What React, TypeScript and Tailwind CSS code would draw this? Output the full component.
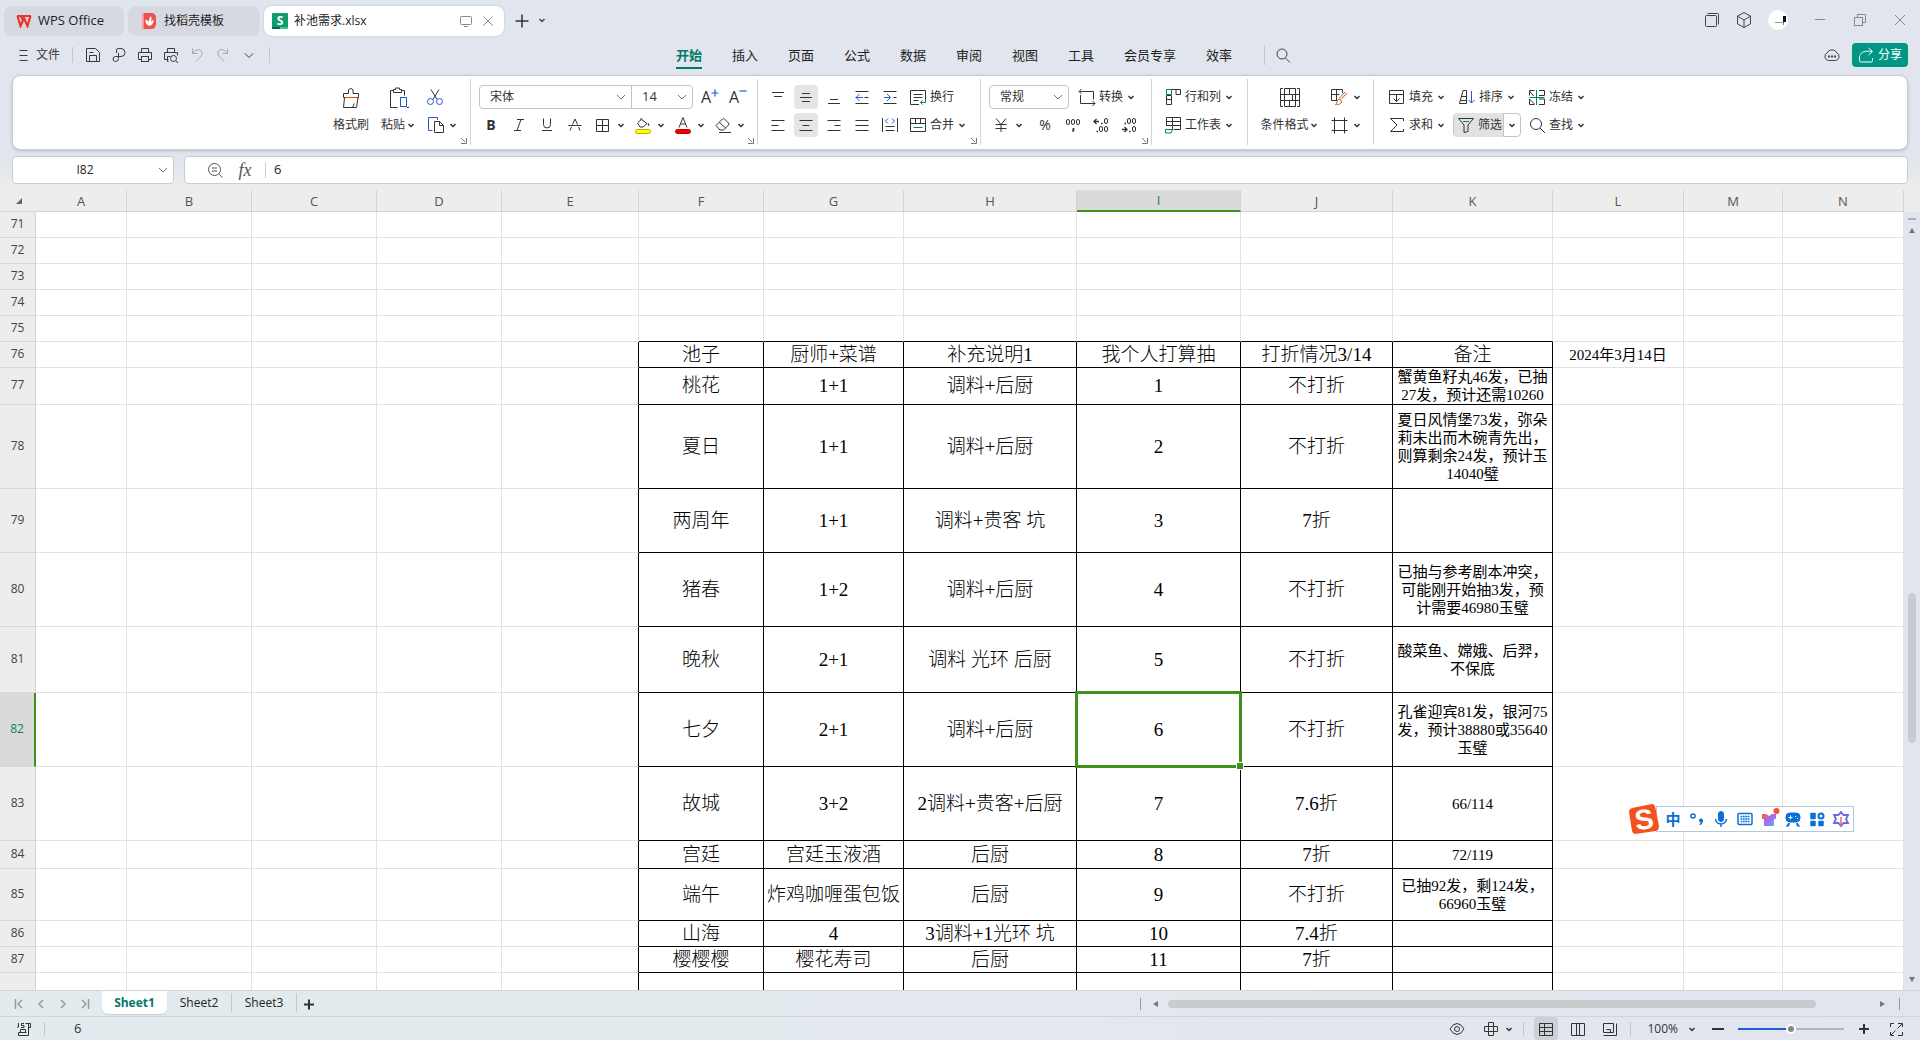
import { useState } from "react";
import type { ReactNode } from "react";
import clsx from "clsx";

type SvgProps = { children: ReactNode; className?: string };

// 24px drawing box, thin strokes
function Svg({ children, className }: SvgProps) {
  return (
    <svg
      viewBox="0 0 24 24"
      fill="none"
      stroke="currentColor"
      aria-hidden="true"
      className={clsx("h-6 w-6 shrink-0", className)}
    >
      {children}
    </svg>
  );
}

function Caret() {
  return (
    <svg viewBox="0 0 12 24" fill="none" stroke="currentColor" strokeWidth="1.5" aria-hidden="true" className="h-6 w-3 shrink-0">
      <path d="M3.5 11 6 13.5 8.5 11" />
    </svg>
  );
}

function Chevron({ className }: { className?: string }) {
  return (
    <svg viewBox="0 0 12 12" fill="none" stroke="currentColor" aria-hidden="true" className={clsx("h-3 w-3 shrink-0", className)}>
      <path d="M2 4l4 4 4-4" />
    </svg>
  );
}

function IconButton({ label, active, children, caret }: { label: string; active?: boolean; children: ReactNode; caret?: boolean }) {
  return (
    <button
      type="button"
      aria-label={label}
      className={clsx("flex h-6 items-center justify-center rounded", caret ? "w-9" : "w-6", active && "bg-[#e5e5e5]")}
    >
      {children}
      {caret && <Caret />}
    </button>
  );
}

function TextButton({ text, children, caret = true }: { text: string; children: ReactNode; caret?: boolean }) {
  return (
    <button type="button" className="flex h-6 items-center whitespace-nowrap">
      {children}
      <span>{text}</span>
      {caret && <span className="ml-0.5"><Caret /></span>}
    </button>
  );
}

function Group({ children, launcher, className }: { children: ReactNode; launcher?: boolean; className?: string }) {
  return (
    <div className={clsx("relative flex h-[66px] shrink-0 border-r border-[#d4d4d4] pt-1.5 last:border-r-0", className)}>
      {children}
      {launcher && (
        <button type="button" aria-label="更多设置" className="absolute right-0.5 bottom-0 h-2 w-2">
          <svg viewBox="0 0 8 8" fill="none" stroke="#777" className="h-2 w-2">
            <path d="M1 1l4 4M6.5 1v5.500H1" />
          </svg>
        </button>
      )}
    </div>
  );
}

function Rows({ children }: { children: ReactNode }) {
  return <div className="flex flex-col gap-1">{children}</div>;
}

function Select({ label, options, className }: { label: string; options: string[]; className?: string }) {
  return (
    <div className={clsx("relative h-6", className)}>
      <select aria-label={label} className="h-full w-full appearance-none bg-transparent pl-2.5 outline-none">
        {options.map((o) => (
          <option key={o}>{o}</option>
        ))}
      </select>
      <Chevron className="pointer-events-none absolute top-1.5 right-1 text-[#777]" />
    </div>
  );
}

function TitleBar() {
  return (
    <header className="flex h-10 items-center pl-1 pr-2">
      <div className="mt-0.5 flex h-[30px] gap-1">
        <button type="button" className="flex w-[120px] items-center gap-1.5 rounded-lg bg-[#d6d9e1] pl-3 text-[13px]">
          <svg viewBox="0 0 16 14" fill="none" stroke="#f0322a" strokeWidth="2.200" className="h-[14px] w-4">
            <path d="M1 2h14M1.500 2 4.500 12 8 4l3.500 8L14.500 2M5 2l2.500 5" />
          </svg>
          WPS Office
        </button>
        <button type="button" className="flex w-[132px] items-center gap-2 rounded-lg bg-[#d6d9e1] pl-3.5">
          <svg viewBox="0 0 14 16" className="h-4 w-3.5">
            <path d="M0 0h9q5 0 5 5v6q0 5-5 5H0z" fill="#ef5350" />
            <path d="M0 0h2v16H0z" fill="#f99" />
            <path d="M7.500 13C3 11 3 8 4 6.500 6 8 7 8 7 10 7 7 7 5 9 3c1 4 0 5 0 6l2.500-2.500C12 10 10 12 7.500 13z" fill="#fff" />
          </svg>
          找稻壳模板
        </button>
        <div className="flex w-[240px] items-center rounded-lg bg-white pr-2.5 pl-2 shadow-[0_0_2px_#b4b8c0]">
          <svg viewBox="0 0 16 16" className="mr-1.5 h-4 w-4">
            <rect width="16" height="16" rx="1" fill="#119c6b" />
            <path d="M0 14h8v2H0z" fill="#0a6b49" />
            <path d="M8 14h8v2H8z" fill="#3fc492" />
            <text x="8" y="11.500" textAnchor="middle" fontSize="12" fontWeight="700" fill="#fff" fontFamily="Open Sans">S</text>
          </svg>
          <span className="flex-1">补池需求.xlsx</span>
          <button type="button" aria-label="窗口显示" className="mr-2.5 text-[#888]">
            <svg viewBox="0 0 12 12" fill="none" stroke="currentColor" className="h-3 w-3">
              <rect x=".5" y="1.500" width="11" height="8" rx="1" />
              <path d="M4 11.500h4" />
            </svg>
          </button>
          <button type="button" aria-label="关闭标签" className="text-[#888]">
            <svg viewBox="0 0 12 12" fill="none" stroke="currentColor" className="h-3 w-3">
              <path d="M1.500 1.500l9 9M10.500 1.500l-9 9" />
            </svg>
          </button>
        </div>
      </div>
      <button type="button" aria-label="新建标签" className="mt-0.5 ml-2.5 text-[#333]">
        <svg viewBox="0 0 16 16" fill="none" stroke="currentColor" strokeWidth="1.500" className="h-4 w-4">
          <path d="M8 1.500v13M1.500 8h13" />
        </svg>
      </button>
      <button type="button" aria-label="标签列表" className="ml-1.5 text-[#444]"><Caret /></button>

      <div className="ml-auto flex items-center text-[#444]">
        <button type="button" aria-label="标签页" className="mr-2">
          <Svg>
            <rect x="5.500" y="7.500" width="11" height="11" rx="1" />
            <path d="M7.500 5.500h10q1 0 1 1v10" />
          </Svg>
        </button>
        <button type="button" aria-label="应用" className="mr-3">
          <Svg>
            <path d="M12 4.500l6.500 3.700v7.600L12 19.500l-6.500-3.700V8.200zM5.500 8.200 12 12l6.500-3.800M12 12v7.500" />
          </Svg>
        </button>
        <button type="button" aria-label="账号" className="mr-5 h-5 w-5 overflow-hidden rounded-full bg-white">
          <svg viewBox="0 0 20 20" className="h-5 w-5">
            <path d="M7 12.500h9" stroke="#999" />
            <path d="M15 6h3v6h-3z" fill="#111" />
            <path d="M15.500 12v3" stroke="#777" />
          </svg>
        </button>
        <div className="flex gap-4 text-[#888]">
          <button type="button" aria-label="最小化"><Svg><path d="M7 11.500h10" /></Svg></button>
          <button type="button" aria-label="还原">
            <Svg>
              <rect x="6.500" y="9.500" width="8" height="8" />
              <path d="M9.500 9.500v-3h8v8h-3" />
            </Svg>
          </button>
          <button type="button" aria-label="关闭"><Svg><path d="M7 7l10 10M17 7 7 17" /></Svg></button>
        </div>
      </div>
    </header>
  );
}

const MENUS = ["开始", "插入", "页面", "公式", "数据", "审阅", "视图", "工具", "会员专享", "效率"];

function MenuBar() {
  return (
    <div className="grid h-[30px] grid-cols-[1fr_auto_1fr] items-center px-3">
      <div className="flex items-center text-[#3a3a3a]">
        <button type="button" className="flex items-center">
          <Svg><path d="M7.500 7.500h8M7.500 12.500h8M7.500 17.500h8" /></Svg>
          文件
        </button>
        <span className="ml-3 h-4 w-px bg-[#c3c6cd]" />
        <div className="ml-2 flex items-center gap-0.5">
          <button type="button" aria-label="保存">
            <Svg>
              <path d="M5.500 5.500h9l4 4v9h-13zM8.500 18v-5.500h7V18M8.500 9.500h4" />
            </Svg>
          </button>
          <button type="button" aria-label="输出为PDF">
            <Svg>
              <path d="M9.500 10V7q0-1.500 2-1.500h2.500a4 4 0 0 1 0 8H8.500a2.500 2.500 0 0 0 0 5q3 0 3-3V10" />
            </Svg>
          </button>
          <button type="button" aria-label="打印">
            <Svg>
              <path d="M8.500 9.500v-4h7v4M8.500 16.500h-3v-7h13v7h-3" />
              <rect x="8.500" y="13.500" width="7" height="5" />
            </Svg>
          </button>
          <button type="button" aria-label="打印预览">
            <Svg>
              <path d="M8.500 9.500v-4h7v4M9.500 16.500h-4v-7h13v3M9.500 18.500h-1v-5h3" />
              <circle cx="14.500" cy="15.500" r="3" />
              <path d="M17 18l2 2" />
            </Svg>
          </button>
          <button type="button" aria-label="撤销" className="text-[#a5a8ae]">
            <Svg><path d="M7.500 5.500v5h5M8 10c3-5 9-4 9 0 0 3-3 5-6 8.500" /></Svg>
          </button>
          <button type="button" aria-label="恢复" className="text-[#a5a8ae]">
            <Svg><path d="M16.500 5.500v5h-5M16 10c-3-5-9-4-9 0 0 3 3 5 6 8.500" /></Svg>
          </button>
          <button type="button" aria-label="自定义"><Svg><path d="M8 10.500l4 4 4-4" /></Svg></button>
        </div>
        <span className="ml-2 h-4 w-px bg-[#c3c6cd]" />
      </div>

      <nav className="ml-[51px] flex items-center text-[13px] text-[#222]">
        <div className="flex gap-[30px]">
          {MENUS.map((m, i) => (
            <a
              key={m}
              href="#"
              className={clsx("border-b-2 pt-0.5 leading-6 whitespace-nowrap", i === 0 ? "border-[#007a67] font-bold text-[#007a67]" : "border-transparent")}
            >
              {m}
            </a>
          ))}
        </div>
        <span className="ml-8 h-5 w-px bg-[#c3c6cd]" />
        <button type="button" aria-label="搜索" className="ml-1.5 text-[#444]">
          <Svg>
            <circle cx="11" cy="11" r="5" />
            <path d="M14.500 15l4.500 4.500" />
          </Svg>
        </button>
      </nav>

      <div className="flex items-center justify-end gap-2 text-[#444]">
        <button type="button" aria-label="云同步">
          <Svg>
            <path d="M8.500 17.500a4 4 0 0 1-1.500-7.500 5.500 5.500 0 0 1 10 0 4 4 0 0 1-1.500 7.500z" />
            <path d="M8 13.500h2M11 13.500h2M14 13.500h2" strokeWidth="2" />
          </Svg>
        </button>
        <button type="button" className="flex h-6 w-14 items-center rounded bg-[#009884] pl-0.5 text-white">
          <Svg><path d="M5.500 13v4.500q0 1.500 1.500 1.500h10q1.500 0 1.500-1.500V15M6 12.500C7 9 11 7.500 18 8.500M14.500 5l4 3.500-4 3.500" /></Svg>
          分享
        </button>
      </div>
    </div>
  );
}

function AlignIcon({ d }: { d: string }) {
  return <Svg><path d={d} /></Svg>;
}

function Ribbon() {
  return (
    <section aria-label="功能区" className="mx-3 mt-[5px] flex h-[75px] justify-center rounded-lg border border-[#c9cdd3] bg-white pt-[3px] text-[#333] shadow-[0_1px_3px_#b8bcc4]">
      <Group launcher className="pr-[11px]">
        <button type="button" className="mr-3 flex w-9 flex-col items-center gap-1 whitespace-nowrap">
          <Svg>
            <path d="M4.500 8.500h5V5a2.500 2.500 0 0 1 4.500 0v3.500h5.500v4h-15zM5.500 13l-1 9.500h13l1.500-10M13 22.500q2-1 2-4" />
            <path d="M6 12.500h12" stroke="#c55a11" />
          </Svg>
          <span className="leading-6">格式刷</span>
        </button>
        <button type="button" className="mr-1.5 flex w-[36px] flex-col items-center gap-1">
          <Svg>
            <path d="M6.500 5.500h-3v17h7M14.500 5.500h3v5M6.500 4.500h2V3h4v1.500h2v3h-8z" />
            <rect x="13.500" y="12.500" width="6" height="9" stroke="#2456d6" />
            <path d="M20 22.500h2" />
          </Svg>
          <span className="flex items-center leading-6 whitespace-nowrap">粘贴<Caret /></span>
        </button>
        <Rows>
          <IconButton label="剪切">
            <Svg>
              <path d="M8 4.500l6 10M16 4.500l-6 10" />
              <circle cx="7.500" cy="16.500" r="3" stroke="#2456d6" />
              <circle cx="16.500" cy="16.500" r="3" stroke="#2456d6" />
            </Svg>
          </IconButton>
          <IconButton label="复制" caret>
            <Svg>
              <path d="M14.500 7V4.500h-9v13h4" stroke="#2456d6" />
              <path d="M11.500 8.500h5l4 4v7h-9zM16.500 8.500v4h4" />
            </Svg>
          </IconButton>
        </Rows>
      </Group>

      <Group launcher className="pr-2 pl-2">
        <Rows>
          <div className="flex items-center">
            <div className="flex rounded border border-[#c4c4c4]">
              <Select label="字体" options={["宋体", "黑体"]} className="-my-px w-[151px]" />
              <Select label="字号" options={["14", "11"]} className="-my-px w-[61px] border-l border-[#c4c4c4] text-[13px]" />
            </div>
            <button type="button" aria-label="增大字号" className="ml-1 flex h-6 w-6 text-base leading-6">
              <span className="pl-1">A</span>
              <svg viewBox="0 0 8 8" stroke="#2456d6" strokeWidth="1.200" className="mt-1 h-2 w-2"><path d="M4 .5v7M.5 4h7" /></svg>
            </button>
            <button type="button" aria-label="减小字号" className="ml-1 flex h-6 w-6 text-base leading-6">
              <span className="pl-1">A</span>
              <svg viewBox="0 0 8 8" stroke="#2456d6" strokeWidth="1.200" className="mt-0.5 h-2 w-2"><path d="M.5 4h7" /></svg>
            </button>
          </div>
          <div className="flex">
            <div className="flex gap-1 text-sm">
              <IconButton label="加粗"><b>B</b></IconButton>
              <IconButton label="倾斜"><Svg><path d="M10 6.500h7M7 17.500h7M14 6.500l-4 11" /></Svg></IconButton>
              <IconButton label="下划线"><Svg><path d="M8.500 5.500v6a3.500 3.500 0 0 0 7 0v-6M7 17.500h10" /></Svg></IconButton>
              <IconButton label="删除线"><Svg><path d="M5.500 12.500h13M9.500 11.500 12 6l2.500 5.500M8.500 14 7 17.500M15.500 14l1.500 3.500" /></Svg></IconButton>
            </div>
            <div className="ml-1 flex gap-1">
              <IconButton label="边框" caret>
                <Svg><path d="M5.500 6.500h12v12h-12zM11.500 6.500v12M5.500 12.500h12" /></Svg>
              </IconButton>
              <IconButton label="填充颜色" caret>
                <Svg>
                  <path d="M9 5.500l7 5-4 3.500H9L6.500 10l5-4.500M17 10l1 3" />
                  <rect x="4.500" y="16.500" width="15" height="4" rx="2" fill="#ff0" stroke="#b5b500" />
                </Svg>
              </IconButton>
              <IconButton label="字体颜色" caret>
                <Svg>
                  <path d="M8 14.500 12 4.500l4 10M9.500 11h5" />
                  <rect x="4.500" y="16.500" width="15" height="4" rx="2" fill="#f00000" stroke="#b80000" />
                </Svg>
              </IconButton>
              <IconButton label="清除" caret>
                <Svg><path d="M5 12.500 11.500 6q1-1 2 0l4 4q1 1 0 2l-5 5H9zM8.500 9.500l6 5.500M8 19.500h12" /></Svg>
              </IconButton>
            </div>
          </div>
        </Rows>
      </Group>

      <Group launcher className="pr-3 pl-2">
        <Rows>
          <div className="flex gap-1">
            <IconButton label="顶端对齐"><AlignIcon d="M6 7.500h12M8 11.500h8" /></IconButton>
            <IconButton label="垂直居中" active><AlignIcon d="M8 8.500h8M6 12.500h12M8 16.500h8" /></IconButton>
            <IconButton label="底端对齐"><AlignIcon d="M8 14.500h8M6 18.500h12" /></IconButton>
            <IconButton label="减少缩进">
              <Svg>
                <path d="M5.500 6.500h13M14.500 12.500h4M5.500 18.500h13" />
                <path d="M6 12.500h7M9.500 9 6 12.500 9.500 16" stroke="#2456d6" />
              </Svg>
            </IconButton>
            <IconButton label="增加缩进">
              <Svg>
                <path d="M5.500 6.500h13M15.500 12.500h3M5.500 18.500h13" />
                <path d="M6 12.500h6M9 9l3.500 3.500L9 16" stroke="#2456d6" />
              </Svg>
            </IconButton>
            <TextButton text="换行" caret={false}>
              <Svg>
                <path d="M13 19.500H4.500v-14h15V14M7.500 9.500h9M7.500 12.500h9M7.500 15.500h5" />
                <path d="M19.500 14v3.500h-5M16.500 15.500l-2 2 2 2" stroke="#0a7f5f" />
              </Svg>
            </TextButton>
          </div>
          <div className="flex gap-1">
            <IconButton label="左对齐"><AlignIcon d="M5.500 7.500h13M5.500 12.500h7M5.500 17.500h13" /></IconButton>
            <IconButton label="水平居中" active><AlignIcon d="M5.500 7.500h13M8.500 12.500h7M5.500 17.500h13" /></IconButton>
            <IconButton label="右对齐"><AlignIcon d="M5.500 7.500h13M12.500 12.500h6M5.500 17.500h13" /></IconButton>
            <IconButton label="两端对齐"><AlignIcon d="M5.500 7.500h13M5.500 12.500h13M5.500 17.500h13" /></IconButton>
            <IconButton label="分散对齐">
              <Svg>
                <path d="M4.500 5v14M19.500 5v14M7.500 13.500h9M7.500 17.500h9" />
                <path d="M10 5.500 7.500 8l2.500 2.500M14 5.500 16.500 8 14 10.500" stroke="#2456d6" />
              </Svg>
            </IconButton>
            <TextButton text="合并">
              <Svg>
                <path d="M4.500 5.500h15v13h-15zM4.500 10.500h15M9.500 5.500v5M14.500 5.500v5" />
                <path d="M7.500 14.500h9" stroke="#0a7f5f" />
              </Svg>
            </TextButton>
          </div>
        </Rows>
      </Group>

      <Group launcher className="pr-2.5 pl-2">
        <Rows>
          <div className="flex items-center">
            <div className="mr-1.5 rounded border border-[#c4c4c4]">
              <Select label="数字格式" options={["常规", "数值"]} className="-my-px w-[78px]" />
            </div>
            <TextButton text="转换">
              <Svg><path d="M6.500 4 4 6.500 6.500 9M4.500 6.500h14v8M5.500 10v8.500H20M17.500 16l2.500 2.500-2.500 2.500" /></Svg>
            </TextButton>
          </div>
          <div className="flex gap-1">
            <IconButton label="货币" caret><Svg><path d="M7 5.500l5 6 5-6M6.500 11.500h11M6.500 15.500h11M12 11.500V19" /></Svg></IconButton>
            <span className="w-0" />
            <IconButton label="百分比"><span className="text-sm">%</span></IconButton>
            <IconButton label="千位分隔">
              <Svg>
                <rect x="5.500" y="6.500" width="3" height="5" rx="1.500" />
                <rect x="10.500" y="6.500" width="3" height="5" rx="1.500" />
                <rect x="15.500" y="6.500" width="3" height="5" rx="1.500" />
                <path d="M12.500 15v2l-1 1.500" strokeWidth="1.800" />
              </Svg>
            </IconButton>
            <IconButton label="增加小数位">
              <Svg>
                <path d="M10 8.500H5M7.500 6 5 8.500 7.500 11M12 10.500h1.500M7.500 18.500H9" strokeWidth="1.300" />
                <rect x="15.500" y="5.500" width="3" height="5" rx="1.500" />
                <rect x="10.500" y="13.500" width="3" height="5" rx="1.500" />
                <rect x="15.500" y="13.500" width="3" height="5" rx="1.500" />
              </Svg>
            </IconButton>
            <IconButton label="减少小数位">
              <Svg>
                <path d="M5 16.500h5M7.500 14l2.500 2.500L7.500 19M12 18.500h1.500M7.500 10.500H9" strokeWidth="1.300" />
                <rect x="15.500" y="13.500" width="3" height="5" rx="1.500" />
                <rect x="10.500" y="5.500" width="3" height="5" rx="1.500" />
                <rect x="15.500" y="5.500" width="3" height="5" rx="1.500" />
              </Svg>
            </IconButton>
          </div>
        </Rows>
      </Group>

      <Group className="pr-3 pl-[9px]">
        <Rows>
          <TextButton text="行和列">
            <Svg>
              <path d="M10.500 4.500h9v5h-4.500v-5M5.500 10.500h5v9h-5zM5.500 14.500h5" />
              <path d="M5.500 4.500h5v5h-5z" stroke="#0a7f5f" />
            </Svg>
          </TextButton>
          <TextButton text="工作表">
            <Svg>
              <path d="M5.500 13V4.500h14v12h-7M5.500 8.500h14M11.500 4.500v12M5.500 12.500h14" />
              <path d="M4.500 16.500h7l-1.500 3.500H4.500z" stroke="#0a7f5f" />
            </Svg>
          </TextButton>
        </Rows>
      </Group>

      <Group className="pr-2.5 pl-3">
        <button type="button" className="mr-1.5 flex w-[61px] flex-col items-center gap-1">
          <Svg>
            <path d="M5 3.500H2.500v18H5M19 3.500h2.500v18H19M6.500 3.500h11v18h-11zM2.500 9.500h19M2.500 15.500h19M11.500 3.500v6M14.500 9.500v6M11.500 15.500v6" />
          </Svg>
          <span className="flex items-center leading-6 whitespace-nowrap">条件格式<Caret /></span>
        </button>
        <Rows>
          <IconButton label="表格样式" caret>
            <Svg>
              <path d="M10 15.500H4.500v-11h11V8M4.500 9.500h8M9.500 4.500v11" />
              <path d="M20 8l-6 6.500M18 7l-6 6.500M12 14l2.500 2c0 3-3 4-6 3.500 2-1 1-4 3.500-5.500z" stroke="#c55a11" />
            </Svg>
          </IconButton>
          <IconButton label="单元格" caret>
            <Svg><path d="M4.500 7.500h16M4.500 17.500h16M7.500 4.500v16M17.500 4.500v16" /></Svg>
          </IconButton>
        </Rows>
      </Group>

      <Group className="pl-[11px]">
        <Rows>
          <div className="flex gap-2">
            <TextButton text="填充">
              <Svg><path d="M4.500 5.500h14v13h-14zM4.500 9.500h14M11.500 9.500v7M8.500 13.500l3 3 3-3" /></Svg>
            </TextButton>
            <TextButton text="排序">
              <Svg>
                <path d="M4.500 18.500 8 5.500h3.500v13zM6.500 11.500h5M5.500 15.500h6" />
                <path d="M16.500 6v12M13.500 15l3 3 3-3" stroke="#2456d6" />
              </Svg>
            </TextButton>
            <TextButton text="冻结">
              <Svg>
                <path d="M9.500 5.500h-5v5M14 5.500h5.500v5H14M4.500 14v5.500h5M14 14h5.500v5.500H14M4.500 6l4 5M4.500 14l5 5" />
                <path d="M11.500 5v15M4.500 12.500h15" stroke="#0a7f5f" />
              </Svg>
            </TextButton>
          </div>
          <div className="flex gap-2">
            <TextButton text="求和">
              <Svg><path d="M18.500 8V5.500h-13l6.500 6.500-6.500 6.500h13V16" /></Svg>
            </TextButton>
            <div className="-mr-1 -ml-0.5 flex h-6 w-[68px] rounded border border-[#c4c4c4]">
              <button type="button" className="-my-px flex items-center rounded-l border-r border-[#c4c4c4] bg-[#e2e2e2] pr-px">
                <Svg>
                  <path d="M4.500 5.500h15L14 12v6.500l-4 1V12z" />
                  <path d="M9 8.500h6" stroke="#0a7f5f" />
                </Svg>
                筛选
              </button>
              <button type="button" aria-label="筛选选项" className="-my-px pl-0.5"><Caret /></button>
            </div>
            <TextButton text="查找">
              <Svg>
                <circle cx="11" cy="11" r="5.500" />
                <path d="M15 15l5 5" />
              </Svg>
            </TextButton>
          </div>
        </Rows>
      </Group>
    </section>
  );
}

function FormulaBar() {
  return (
    <div className="mx-3 mt-1.5 flex h-7 gap-2.5">
      <div className="flex w-[162px] items-center rounded border border-[#c9cdd3] bg-white pr-1">
        <input aria-label="名称框" defaultValue="I82" className="min-w-0 flex-1 bg-transparent text-center outline-none" />
        <Chevron className="text-[#777]" />
      </div>
      <div className="flex flex-1 items-center rounded border border-[#c9cdd3] bg-white pl-[18px] text-[#555]">
        <button type="button" aria-label="浏览公式">
          <Svg>
            <circle cx="11.500" cy="11.500" r="6" />
            <path d="M16 16l3.500 3.500M9 10h5M9 13h5" />
          </Svg>
        </button>
        <button type="button" aria-label="插入函数" className="ml-1.5 w-6 font-['Liberation_Serif',serif] text-lg leading-6 italic">fx</button>
        <span className="ml-2 h-4 w-px bg-[#ccc]" />
        <input aria-label="编辑栏" defaultValue="6" className="min-w-0 flex-1 bg-transparent pl-2 text-[13px] text-[#222] outline-none" />
      </div>
    </div>
  );
}

const COLS = [
  { name: "A", width: "w-[91px]" },
  { name: "B", width: "w-[125px]" },
  { name: "C", width: "w-[125px]" },
  { name: "D", width: "w-[125px]" },
  { name: "E", width: "w-[137px]" },
  { name: "F", width: "w-[125px]" },
  { name: "G", width: "w-[140px]" },
  { name: "H", width: "w-[173px]" },
  { name: "I", width: "w-[164px]" },
  { name: "J", width: "w-[152px]" },
  { name: "K", width: "w-[160px]" },
  { name: "L", width: "w-[131px]" },
  { name: "M", width: "w-[99px]" },
  { name: "N", width: "" },
];

type Row = { n: number; h: string; cells?: string[] };

// cells hold the values of columns F to L
const ROWS: Row[] = [
  { n: 71, h: "h-[26px]" },
  { n: 72, h: "h-[26px]" },
  { n: 73, h: "h-[26px]" },
  { n: 74, h: "h-[26px]" },
  { n: 75, h: "h-[26px]" },
  { n: 76, h: "h-[26px]", cells: ["池子", "厨师+菜谱", "补充说明1", "我个人打算抽", "打折情况3/14", "备注", "2024年3月14日"] },
  { n: 77, h: "h-[37px]", cells: ["桃花", "1+1", "调料+后厨", "1", "不打折", "蟹黄鱼籽丸46发，已抽\n27发，预计还需10260"] },
  { n: 78, h: "h-[84px]", cells: ["夏日", "1+1", "调料+后厨", "2", "不打折", "夏日风情堡73发，弥朵\n莉未出而木碗青先出，\n则算剩余24发，预计玉\n14040璧"] },
  { n: 79, h: "h-[64px]", cells: ["两周年", "1+1", "调料+贵客 坑", "3", "7折", ""] },
  { n: 80, h: "h-[74px]", cells: ["猪春", "1+2", "调料+后厨", "4", "不打折", "已抽与参考剧本冲突，\n可能刚开始抽3发，预\n计需要46980玉璧"] },
  { n: 81, h: "h-[66px]", cells: ["晚秋", "2+1", "调料 光环 后厨", "5", "不打折", "酸菜鱼、嫦娥、后羿，\n不保底"] },
  { n: 82, h: "h-[74px]", cells: ["七夕", "2+1", "调料+后厨", "6", "不打折", "孔雀迎宾81发，银河75\n发，预计38880或35640\n玉璧"] },
  { n: 83, h: "h-[74px]", cells: ["故城", "3+2", "2调料+贵客+后厨", "7", "7.6折", "66/114"] },
  { n: 84, h: "h-[28px]", cells: ["宫廷", "宫廷玉液酒", "后厨", "8", "7折", "72/119"] },
  { n: 85, h: "h-[52px]", cells: ["端午", "炸鸡咖喱蛋包饭", "后厨", "9", "不打折", "已抽92发，剩124发，\n66960玉璧"] },
  { n: 86, h: "h-[26px]", cells: ["山海", "4", "3调料+1光环 坑", "10", "7.4折", ""] },
  { n: 87, h: "h-[26px]", cells: ["樱樱樱", "樱花寿司", "后厨", "11", "7折", ""] },
  { n: 88, h: "h-[52px]", cells: ["", "", "", "", "", ""] },
];

function Cell({ row, col, selected, onSelect }: { row: Row; col: number; selected: boolean; onSelect: () => void }) {
  const boxed = row.n >= 76;
  const rightBlack = boxed && col >= 4 && col <= 10;
  const bottomBlack = row.n >= 75 && col >= 5 && col <= 10;
  // notes and the date are set smaller, the heading of the notes is not
  const small = col > 10 || (col === 10 && row.n > 76);
  return (
    <td
      onClick={onSelect}
      className={clsx(
        "relative border-r border-b p-0 text-center align-middle whitespace-pre text-black",
        rightBlack ? "border-r-black" : "border-r-[#e2e2e2]",
        bottomBlack ? "border-b-black" : "border-b-[#e2e2e2]",
        small ? "text-[15px] leading-[18px] font-normal" : "text-[19px] leading-6 font-light",
      )}
    >
      {row.cells?.[col - 5]}
      {selected && (
        <span className="absolute -inset-0.5 z-10 border-[3px] border-[#3f911d]">
          <span className="absolute -right-1 -bottom-1 h-1.5 w-1.5 bg-[#3f911d] outline outline-white" />
        </span>
      )}
    </td>
  );
}

function Sheet() {
  const [active, setActive] = useState({ row: 82, col: 8 });
  return (
    <table className="w-full table-fixed border-separate border-spacing-0 bg-white">
      <thead>
        <tr className="h-[22px] bg-[#ededed] text-[13px] text-[#555]">
          <th className="w-9 border-r border-b border-[#d4d4d4] border-r-transparent p-0">
            <svg viewBox="0 0 6 6" className="ml-4 h-1.5 w-1.5"><path d="M6 0v6H0z" fill="#666" /></svg>
          </th>
          {COLS.map((c, i) => (
            <th
              key={c.name}
              scope="col"
              className={clsx(
                "border-r border-b border-r-[#d4d4d4] p-0 leading-5 font-normal",
                c.width,
                i === active.col ? "border-b-2 border-b-[#3f911d] bg-[#dadada] text-[#0a7f5f]" : "border-b-[#d4d4d4]",
              )}
            >
              {c.name}
            </th>
          ))}
        </tr>
      </thead>
      <tbody className="font-['Liberation_Serif','Noto_Sans_CJK_SC',serif]">
        {ROWS.map((row) => (
          <tr key={row.n} className={row.h}>
            <th
              scope="row"
              className={clsx(
                "border-r border-b border-b-[#d8d8d8] p-0 pb-0.5 font-['Open_Sans',sans-serif] text-xs font-normal",
                row.n === active.row ? "border-r-2 border-r-[#3f911d] bg-[#dadada] text-[#0a7f5f]" : "border-r-[#d4d4d4] bg-[#ededed] text-[#444]",
              )}
            >
              {row.n}
            </th>
            {COLS.map((c, i) => (
              <Cell
                key={c.name}
                row={row}
                col={i}
                selected={active.row === row.n && active.col === i}
                onSelect={() => setActive({ row: row.n, col: i })}
              />
            ))}
          </tr>
        ))}
      </tbody>
    </table>
  );
}

function VerticalScroll() {
  return (
    <div className="flex w-4 shrink-0 flex-col items-center bg-[#ededed] pt-[22px]">
      <div className="flex w-4 flex-1 flex-col items-center bg-[#e1e5ee] pt-1.5 pb-2">
        <span className="h-0.5 w-2 bg-[#aaadb3]" />
        <svg viewBox="0 0 6 5" className="mt-2 h-[5px] w-1.5"><path d="M3 0l3 5H0z" fill="#777" /></svg>
        <span className="basis-[360px]" />
        <span className="h-[150px] w-2 rounded bg-[#c9cbcf]" />
        <svg viewBox="0 0 6 5" className="mt-auto h-[5px] w-1.5"><path d="M3 5l3-5H0z" fill="#777" /></svg>
      </div>
    </div>
  );
}

function ImeBar() {
  return (
    <div className="absolute top-[804px] right-[66px] flex h-[30px] items-center text-[#0a6fd6]">
      <svg viewBox="0 0 32 32" className="z-10 -mr-1 h-8 w-8">
        <path d="M4 5 24 1q2 0 3 2l4 20q0 4-3 5L7 31q-2 0-3-3L1 9q0-3 3-4z" fill="#f4511e" />
        <text x="16" y="26" textAnchor="middle" fontSize="28" fontWeight="700" fill="#fff" fontFamily="Liberation Sans" transform="rotate(-8 16 16)">S</text>
      </svg>
      <div className="flex h-[26px] items-center border border-[#b3c8de] bg-white pl-1">
        <button type="button" className="h-6 w-6 text-[15px] leading-6 font-bold">中</button>
        <button type="button" aria-label="标点">
          <Svg>
            <circle cx="8" cy="9" r="2" strokeWidth="1.500" />
            <circle cx="16" cy="13.500" r="2" fill="currentColor" stroke="none" />
            <path d="M17.200 13.500q0 3-2.500 4" strokeWidth="1.500" />
          </Svg>
        </button>
        <button type="button" aria-label="语音">
          <Svg>
            <rect x="9.500" y="4.500" width="5" height="10" rx="2.500" fill="currentColor" />
            <path d="M6.500 12a5.500 5 0 0 0 11 0M12 17v3" strokeWidth="1.500" />
          </Svg>
        </button>
        <button type="button" aria-label="软键盘">
          <Svg>
            <rect x="5" y="6.500" width="14" height="11" rx="1" strokeWidth="1.500" />
            <path d="M7.500 9.500h9M7.500 12h9M7.500 14.500h9" strokeWidth="1.500" strokeDasharray="1.800 .6" />
          </Svg>
        </button>
        <button type="button" aria-label="皮肤">
          <Svg>
            <defs>
              <linearGradient id="skin" x1="0" y1="0" x2="1" y2="1">
                <stop offset="0" stopColor="#ff5a3c" />
                <stop offset=".5" stopColor="#a86cf5" />
                <stop offset="1" stopColor="#38c6ff" />
              </linearGradient>
            </defs>
            <path d="M5 7h4l3 2 3-2h4v5h-2v7H7v-7H5z" fill="url(#skin)" stroke="none" />
            <circle cx="19.500" cy="4" r="3" fill="#ff4b2b" stroke="none" />
          </Svg>
        </button>
        <button type="button" aria-label="游戏">
          <Svg>
            <rect x="5" y="6" width="14" height="9" rx="4" fill="currentColor" />
            <path d="M5.500 19q2 0 2.500-3M18.500 19q-2 0-2.500-3" strokeWidth="2" />
            <path d="M7.500 10.500h4M9.500 8.500v4M14 9.500h1M16 11.500h1" stroke="#fff" />
          </Svg>
        </button>
        <button type="button" aria-label="工具箱">
          <Svg>
            <path d="M6 6.500h4v5H6zM6 14.500h4v4H6zM14 14.500h4v4h-4z" fill="currentColor" strokeLinejoin="round" strokeWidth="1.500" />
            <circle cx="16" cy="9" r="2.500" strokeWidth="2" />
          </Svg>
        </button>
        <button type="button" aria-label="智能助手" className="text-[#7068e0]">
          <Svg>
            <path d="M12 5l2.500 3H19l-2 4 2 4h-4.500L12 19l-2.500-3H5l2-4-2-4h4.500z" strokeWidth="1.800" />
            <path d="M12 10v9" stroke="#d86a8a" strokeWidth="1.500" />
          </Svg>
        </button>
      </div>
    </div>
  );
}

function SheetTabs() {
  return (
    <div className="flex h-[27px] items-center border-t border-b border-[#d0d5d9] pr-5">
      <div className="flex items-center pl-2 text-[#999]">
        {[
          ["第一个", "M8.500 7v10M15 8l-4 4 4 4"],
          ["上一个", "M14 8l-4 4 4 4"],
          ["下一个", "M10 8l4 4-4 4"],
          ["最后一个", "M15.500 7v10M9 8l4 4-4 4"],
        ].map(([label, d]) => (
          <button key={label} type="button" aria-label={label} className="w-[22px]">
            <Svg className="-ml-px"><path d={d} strokeWidth="1.500" /></Svg>
          </button>
        ))}
      </div>
      <div role="tablist" className="ml-1.5 flex h-full">
        <button type="button" role="tab" aria-selected="true" className="mb-0.5 w-[65px] rounded-b-md bg-white font-bold text-[#007a67] shadow-[0_1px_1px_#c9cdd3]">
          Sheet1
        </button>
        {["Sheet2", "Sheet3"].map((s) => (
          <button key={s} type="button" role="tab" aria-selected="false" className="mt-0.5 mb-1 w-[65px] border-r border-[#c3c8cc]">
            {s}
          </button>
        ))}
      </div>
      <button type="button" aria-label="新建工作表" className="text-[#333]">
        <Svg><path d="M12 7.500v10M7 12.500h10" strokeWidth="2" /></Svg>
      </button>
      <div className="ml-auto flex w-2/5 items-center">
        <span className="h-3 w-px bg-[#999]" />
        <svg viewBox="0 0 5 6" className="ml-3 h-1.5 w-[5px]"><path d="M5 0v6L0 3z" fill="#777" /></svg>
        <span className="ml-2.5 flex flex-1"><span className="h-2 w-[91%] rounded bg-[#c9cccf]" /></span>
        <svg viewBox="0 0 5 6" className="mr-3.5 h-1.5 w-[5px]"><path d="M0 0v6l5-3z" fill="#777" /></svg>
        <span className="h-3 w-px bg-[#999]" />
      </div>
    </div>
  );
}

function StatusBar() {
  const [zoom, setZoom] = useState(50);
  return (
    <footer className="flex h-[23px] items-center px-3 text-[#333]">
      <Svg>
        <path d="M6.500 6v4H5M12 6.500H9.500v2H12v2H9M13.500 6.500h5v4h-2M16.500 6.500v12h-10v-3h8M8.500 15.500v-3h5v3" />
      </Svg>
      <span className="ml-2 h-3.5 w-px bg-[#c3c6cd]" />
      <span className="ml-[29px] text-[13px]">6</span>
      <div className="ml-auto flex items-center">
        <button type="button" aria-label="护眼模式" className="mr-2.5">
          <Svg>
            <path d="M5 12q3-5.500 7-5.500t7 5.500q-3 5.500-7 5.500T5 12z" />
            <circle cx="12" cy="12" r="2.500" />
          </Svg>
        </button>
        <IconButton label="阅读模式" caret>
          <Svg><path d="M9.500 9.500v-4h5v4h4v5h-4v4h-5v-4h-4v-5zM9.500 9.500h5v5h-5z" /></Svg>
        </IconButton>
        <span className="mr-2.5 ml-2 h-3.5 w-px bg-[#c3c6cd]" />
        <button type="button" aria-label="普通视图" className="mr-2 h-[23px] rounded bg-[#cdd1d7]">
          <Svg><path d="M5.500 6.500h13v12h-13zM5.500 10.500h13M10.500 6.500v12M5.500 14.500h13" /></Svg>
        </button>
        <button type="button" aria-label="分页预览" className="mr-2">
          <Svg><path d="M5.500 6.500h13v12h-13zM10.500 6.500v12M13.500 6.500v12" /></Svg>
        </button>
        <button type="button" aria-label="页面布局">
          <Svg><path d="M5.500 6.500h10v9h-10zM18.500 6.500v12h-13M8.500 12.500h4v3" /></Svg>
        </button>
        <span className="mr-4 ml-2 h-3.5 w-px bg-[#c3c6cd]" />
        <button type="button" className="flex items-center gap-2">
          {zoom * 2}%<Caret />
        </button>
        <button type="button" aria-label="缩小" className="ml-2" onClick={() => setZoom(Math.max(5, zoom - 5))}>
          <Svg><path d="M6 12h12" strokeWidth="2" /></Svg>
        </button>
        <input
          type="range"
          min={0}
          max={100}
          value={zoom}
          aria-label="缩放"
          onChange={(e) => setZoom(Number(e.target.value))}
          className="mx-2 h-0.5 w-[106px] appearance-none bg-linear-to-r from-[#1f5fd0] from-50% to-[#b4b8be] to-50% [&::-webkit-slider-thumb]:h-2.5 [&::-webkit-slider-thumb]:w-2.5 [&::-webkit-slider-thumb]:appearance-none [&::-webkit-slider-thumb]:rounded-full [&::-webkit-slider-thumb]:border-2 [&::-webkit-slider-thumb]:border-white [&::-webkit-slider-thumb]:bg-[#888]"
        />
        <button type="button" aria-label="放大" onClick={() => setZoom(Math.min(100, zoom + 5))}>
          <Svg><path d="M12 7v10M7 12h10" strokeWidth="2" /></Svg>
        </button>
        <button type="button" aria-label="全屏" className="ml-2">
          <Svg><path d="M10 6.500H6.500V10M14 6.500h4.500V10M10 18.500H6.500V15M14 18.500h4.500V15M18 7l-4.500 4.500M7 18l4.500-4.500" /></Svg>
        </button>
      </div>
    </footer>
  );
}

export default function App() {
  return (
    <div className="relative flex h-screen flex-col overflow-hidden bg-linear-to-r from-[#e2ebed] via-[#e3e9ee] to-[#e1e5ee] font-['Open_Sans','Noto_Sans_CJK_SC',sans-serif] text-xs text-[#222]">
      <div className="bg-linear-to-b from-[#e1e5ed] from-85% to-[#ededed] pb-1.5">
        <TitleBar />
        <MenuBar />
        <Ribbon />
        <FormulaBar />
      </div>
      <main className="flex min-h-0 flex-1 overflow-hidden">
        <div className="min-w-0 flex-1 overflow-hidden">
          <Sheet />
        </div>
        <VerticalScroll />
      </main>
      <SheetTabs />
      <StatusBar />
      <ImeBar />
    </div>
  );
}
